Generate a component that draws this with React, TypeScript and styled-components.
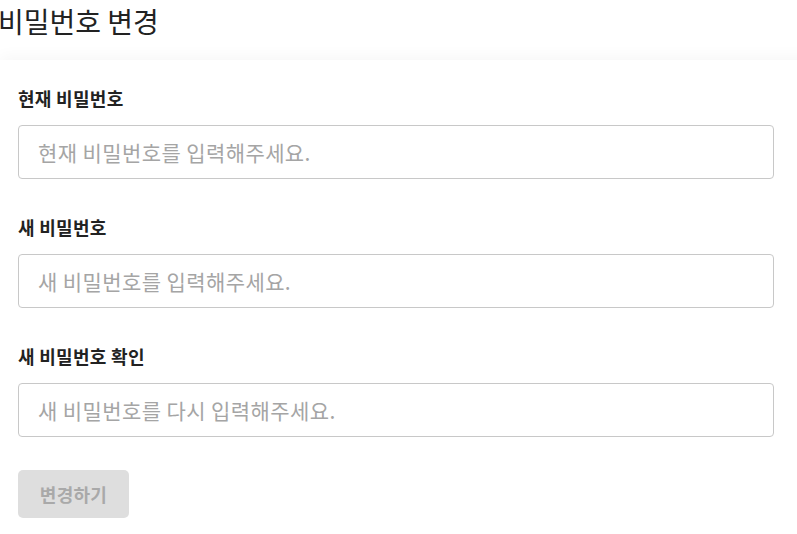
import React from 'react';
import styled, { createGlobalStyle } from 'styled-components';

const GlobalStyle = createGlobalStyle`
  html, body {
    margin: 0;
    padding: 0;
    background: #fff;
    overflow: hidden;
  }
  body {
    font-family: "Noto Sans CJK KR", "Noto Sans", sans-serif;
    color: #222;
  }
`;

const Page = styled.div`
  width: 797px;
  height: 534px;
  overflow: hidden;
`;

const Header = styled.header`
  height: 45px;
`;

const Title = styled.h1`
  margin: 0 0 0 -2px;
  font-size: 28px;
  font-weight: 400;
  line-height: 42px;
  color: #222;
`;

const Card = styled.section`
  margin-top: 15px;
  width: 840px;
  background: #fff;
  box-shadow: 0 -4px 14px rgba(0, 0, 0, 0.035);
  padding: 26px 0 0 18px;
  box-sizing: border-box;
  min-height: 480px;
`;

const Form = styled.form`
  width: 756px;
  display: flex;
  flex-direction: column;
`;

const Field = styled.div`
  display: flex;
  flex-direction: column;
  margin-bottom: 36px;
`;

const Label = styled.label`
  font-size: 18px;
  font-weight: 700;
  letter-spacing: 0.3px;
  line-height: 24px;
  color: #222;
  margin-bottom: 15px;
`;

const Input = styled.input`
  box-sizing: border-box;
  height: 54px;
  width: 100%;
  border: 1px solid #c8c8c8;
  border-radius: 4px;
  padding: 0 19px;
  font-family: inherit;
  font-size: 21px;
  letter-spacing: 0.4px;
  color: #222;
  outline: none;
  &::placeholder {
    color: #a5a5a5;
  }
`;

const Submit = styled.button`
  align-self: flex-start;
  margin-top: -3px;
  width: 111px;
  height: 48px;
  border: none;
  border-radius: 5px;
  background: #dedede;
  color: #a9a9a9;
  font-family: inherit;
  font-size: 18px;
  font-weight: 700;
  letter-spacing: 0.3px;
`;

const fields = [
  { label: '현재 비밀번호', placeholder: '현재 비밀번호를 입력해주세요.' },
  { label: '새 비밀번호', placeholder: '새 비밀번호를 입력해주세요.' },
  { label: '새 비밀번호 확인', placeholder: '새 비밀번호를 다시 입력해주세요.' },
];

export default function App() {
  return (
    <Page>
      <GlobalStyle />
      <Header>
        <Title>비밀번호 변경</Title>
      </Header>
      <Card>
        <Form onSubmit={(e) => e.preventDefault()}>
          {fields.map((f) => (
            <Field key={f.label}>
              <Label>{f.label}</Label>
              <Input type="password" placeholder={f.placeholder} />
            </Field>
          ))}
          <Submit type="submit" disabled>
            변경하기
          </Submit>
        </Form>
      </Card>
    </Page>
  );
}
